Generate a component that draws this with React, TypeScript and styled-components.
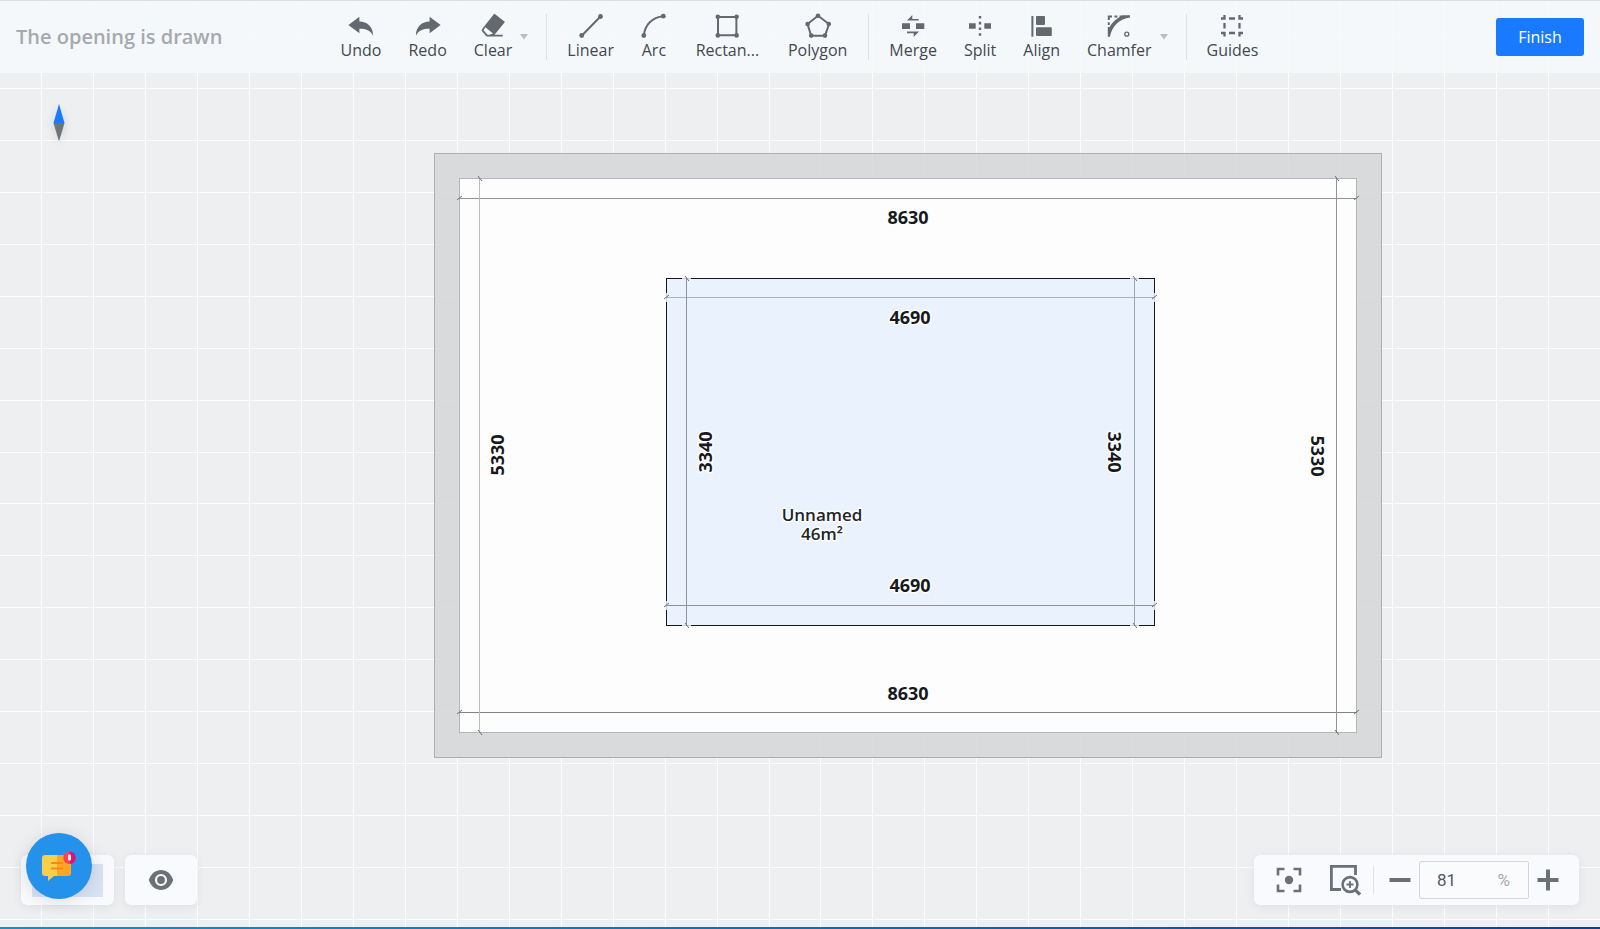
import React from "react";
import styled, { createGlobalStyle } from "styled-components";

const ink = "#64686f";
const sans = `"Open Sans", "Noto Sans", sans-serif`;

const GlobalStyle = createGlobalStyle`
  *, *::before, *::after { box-sizing: border-box; }
  body { margin: 0; background: #eeeff1; font-family: ${sans}; }
  button, input { font: inherit; color: inherit; }
`;

const Shell = styled.div`
  position: relative;
  display: flex;
  flex-direction: column;
  min-height: 100vh;
  overflow: hidden;
  border-bottom: 2px solid transparent;
  border-image: linear-gradient(90deg, #1092cc, #0b66b4 60%, #0b3f9c) 1;
`;

const Canvas = styled.svg`
  position: absolute;
  inset: 0;
  width: 100%;
  height: 100%;
  font-family: ${sans};
`;

const Header = styled.header`
  position: relative;
  display: grid;
  grid-template-columns: 1fr auto 1fr;
  align-items: center;
  height: 73px;
  padding: 0 16px;
  border-top: 1px solid #dcdee1;
  background: rgba(246, 249, 253, 0.85);
`;

const Title = styled.h1`
  margin: 0;
  font-size: 20px;
  line-height: 28px;
  font-weight: 600;
  color: #a6a9ae;
`;

const Toolbar = styled.nav`
  display: flex;
  align-items: center;
`;

const Tool = styled.button<{ $wide?: boolean }>`
  display: flex;
  flex-direction: column;
  align-items: center;
  width: ${(p) => (p.$wide ? "94px" : "auto")};
  padding: 0 14px 0 13px;
  border: 0;
  background: none;
  color: ${ink};
  cursor: pointer;
`;

const ToolIcon = styled.svg`
  width: 26px;
  height: 26px;
  fill: none;
  stroke: currentColor;
  stroke-width: 2;
`;

const ToolLabel = styled.span`
  align-self: stretch;
  font-size: 16px;
  line-height: 22px;
  color: #43484f;
  white-space: nowrap;
`;

const MenuButton = styled.button`
  padding: 0 11px 0 0;
  border: 0;
  background: none;
  color: #b9bcc1;
  margin-left: -6px;
  cursor: pointer;
  svg { display: block; width: 8px; height: 6px; fill: currentColor; }
`;

const Divider = styled.span<{ $short?: boolean }>`
  width: 1px;
  height: ${(p) => (p.$short ? "28px" : "46px")};
  margin: 0 7px;
  background: #dfe1e5;
`;

const Finish = styled.button`
  justify-self: end;
  width: 88px;
  height: 38px;
  border: 0;
  border-radius: 3px;
  background: #1a7aff;
  color: #fff;
  font-size: 16px;
  cursor: pointer;
`;

const Compass = styled.svg`
  position: relative;
  width: 12px;
  height: 38px;
  margin: 31px 0 0 53px;
  filter: drop-shadow(0 2px 4px rgba(0, 0, 0, 0.12));
`;

const Footer = styled.footer`
  position: relative;
  display: flex;
  gap: 11px;
  align-items: center;
  margin-top: auto;
  padding: 0 21px 22px;
`;

const Panel = styled.div<{ $push?: boolean }>`
  position: relative;
  display: flex;
  align-items: center;
  height: 50px;
  margin-left: ${(p) => (p.$push ? "auto" : "0")};
  padding-right: ${(p) => (p.$push ? "12px" : "0")};
  border-radius: 6px;
  background: #f9fafd;
  box-shadow: 0 2px 10px rgba(40, 50, 70, 0.08);
`;

const MiniMap = styled.div`
  width: 71px;
  height: 33px;
  margin: 0 11px;
  background: #d7e3f5;
`;

const ChatButton = styled.button`
  position: absolute;
  left: 5px;
  bottom: 6px;
  width: 66px;
  height: 66px;
  padding: 0;
  border: 0;
  border-radius: 50%;
  background: #2491eb;
  box-shadow: 0 2px 18px rgba(0, 0, 0, 0.12);
  cursor: pointer;
  svg { display: block; width: 66px; height: 66px; }
`;

const IconButton = styled.button<{ $width: number }>`
  display: flex;
  align-items: center;
  justify-content: center;
  width: ${(p) => p.$width}px;
  height: 50px;
  padding: 0;
  border: 0;
  background: none;
  color: #6d7177;
  cursor: pointer;
`;

const Glyph = styled.svg<{ $size: number }>`
  width: ${(p) => p.$size}px;
  height: ${(p) => p.$size}px;
  fill: none;
  stroke: currentColor;
`;

const ZoomField = styled.label`
  display: flex;
  align-items: center;
  width: 110px;
  height: 38px;
  padding: 0 18px 0 17px;
  border: 1px solid #d3d6dc;
  border-radius: 2px;
  background: #fafbfd;
  font-family: Roboto, sans-serif;
  font-size: 17px;
  color: #a6a9ae;
`;

const ZoomInput = styled.input`
  flex: 1;
  min-width: 0;
  padding: 0;
  border: 0;
  outline: 0;
  background: none;
  color: #54585e;
`;

const DimText = styled.text`
  font-size: 18px;
  font-weight: 700;
  fill: #16191d;
  stroke: #fff;
  stroke-width: 3px;
  stroke-linejoin: round;
  paint-order: stroke;
  text-anchor: middle;
`;

const RoomText = styled(DimText)`
  font-size: 17px;
  font-weight: 600;
  fill: #20252b;
`;

const icons: Record<string, React.ReactNode> = {
  Undo: <path stroke="none" fill="currentColor" d="M.4 12 11.4 3.7V8.6C19 8.8 25 13.5 25.1 22.7 22 17 17 15.6 11.4 15.8V20.3Z" />,
  Redo: <path stroke="none" fill="currentColor" d="M25.6 12 14.6 3.7V8.6C7 8.8 1 13.5.9 22.7 4 17 9 15.6 14.6 15.8V20.3Z" />,
  Clear: (
    <>
      <path fill="currentColor" strokeWidth="1.4" strokeLinejoin="round" d="M14.4 1.6 24 9 14.4 20.8 5.2 13.2Z" />
      <path strokeWidth="1.8" strokeLinejoin="round" d="M4.8 13.6 2.5 17.4 7 22.7H22.7M7 22.7H10L14.4 20.8" />
    </>
  ),
  Linear: (
    <>
      <path d="M3.7 22.7 22.7 3.3" />
      <g stroke="none" fill="currentColor"><circle cx="3.7" cy="22.5" r="2.4" /><circle cx="22.5" cy="3.5" r="2.4" /></g>
    </>
  ),
  Arc: (
    <>
      <path d="M2.8 22.5C4 12 11 4.2 22.3 3.2" />
      <g stroke="none" fill="currentColor"><circle cx="2.8" cy="22.5" r="2.4" /><circle cx="22.3" cy="3.2" r="2.4" /></g>
    </>
  ),
  "Rectan...": (
    <>
      <path d="M4 4H22.4V22.2H4Z" />
      <g stroke="none" fill="currentColor">
        <circle cx="3.8" cy="3.8" r="2.3" /><circle cx="22.6" cy="3.8" r="2.3" />
        <circle cx="3.8" cy="22.4" r="2.3" /><circle cx="22.6" cy="22.4" r="2.3" />
      </g>
    </>
  ),
  Polygon: (
    <>
      <path d="M13 2.8 24 11 20 22.8H6.2L2.5 11Z" />
      <g stroke="none" fill="currentColor">
        <circle cx="13" cy="2.8" r="2.3" /><circle cx="23.8" cy="11" r="2.3" /><circle cx="20" cy="22.6" r="2.3" />
        <circle cx="6.2" cy="22.6" r="2.3" /><circle cx="2.6" cy="11" r="2.3" />
      </g>
    </>
  ),
  Merge: (
    <path stroke="none" fill="currentColor" d="M2 10.3H10V16H2ZM16 10.3H24.3V16H16ZM7 7.6 12.3 2V6H18.7V7.6ZM7 18.6H19L13.7 24V20.2H7Z" />
  ),
  Split: (
    <path stroke="none" fill="currentColor" d="M2 10.3H8.7V15.8H2ZM17.3 10.3H24V15.8H17.3ZM11.8 3H14.2V5.4H11.8ZM11.8 8.8H14.2V11.4H11.8ZM11.8 14.6H14.2V17H11.8ZM11.8 20.2H14.2V22.8H11.8Z" />
  ),
  Align: (
    <g stroke="none" fill="currentColor">
      <rect x="2.4" y="3" width="2" height="20.7" />
      <rect x="7" y="3" width="9" height="9" rx="1" />
      <rect x="7" y="14.3" width="15.8" height="8.8" rx="1" />
    </g>
  ),
  Chamfer: (
    <>
      <path d="M1.8 3.4H6M8.4 3.4H11.4M13.6 3.4H18M2.8 3V7M2.8 9.2V12M2.8 14V18" />
      <path stroke="none" fill="currentColor" d="M24 2.3V4.4C13.5 5.8 6.2 12.5 3.9 23.7H1.8V17.5C5 10.500 10 5.200 17.500 2.300Z" />
      <circle cx="20.8" cy="21.2" r="2" strokeWidth="1.3" />
    </>
  ),
  Guides: (
    <path strokeWidth="2.3" d="M5.5 2V6.5M20.5 2V6.5M5.5 19V23.5M20.5 19V23.5M2 5.5H6.5M19.5 5.5H24M2 20H6.5M19.5 20H24M10 5.5H16M10 20H16M5.5 10V15.5M20.5 10V15.5" />
  ),
};

const groups: { name: string; wide?: boolean; menu?: boolean }[][] = [
  [{ name: "Undo" }, { name: "Redo" }, { name: "Clear", menu: true }],
  [{ name: "Linear" }, { name: "Arc" }, { name: "Rectan...", wide: true }, { name: "Polygon" }],
  [{ name: "Merge" }, { name: "Split" }, { name: "Align" }, { name: "Chamfer", menu: true }],
  [{ name: "Guides" }],
];

const columns = Array.from({ length: 60 }, (_, i) => 41 + Math.round((i * 1507) / 29));
const rows = Array.from({ length: 40 }, (_, i) => 36 + Math.round((i * 883) / 17));

type DimProps = { at: number; from: number; to: number; label: string; x: number; y: number; turn?: number; color?: string };

/** Horizontal dimension line with slanted ticks at both ends. */
function DimH({ at, from, to, label, x, y, color = "#909397" }: DimProps) {
  return (
    <g>
      <path d={`M${from} ${at + 0.5}H${to}`} stroke={color} />
      <path d={`M${from - 2} ${at + 2}l5 -4M${to - 3} ${at + 2}l5 -4`} stroke="#6d7074" />
      <DimText x={x} y={y}>{label}</DimText>
    </g>
  );
}

/** Vertical dimension line; its label is turned to run along the line. */
function DimV({ at, from, to, label, x, y, turn = -90, color = "#909397" }: DimProps) {
  return (
    <g>
      <path d={`M${at + 0.5} ${from}V${to}`} stroke={color} />
      <path d={`M${at - 1} ${from - 2}l4 5M${at - 1} ${to - 3}l4 5`} stroke="#6d7074" />
      <DimText transform={`translate(${x} ${y}) rotate(${turn})`} y="6">{label}</DimText>
    </g>
  );
}

function FloorPlan() {
  return (
    <Canvas role="img" aria-label="Floor plan" fill="none">
      <g stroke="#fbfcfd">
        {columns.map((x) => <line key={x} x1={x + 0.5} x2={x + 0.5} y1="0" y2="100%" />)}
        {rows.map((y) => <line key={y} x1="0" x2="100%" y1={y + 0.5} y2={y + 0.5} />)}
      </g>
      <rect x="434.5" y="153.5" width="947" height="604" fill="#d4d6d8" fillOpacity="0.85" stroke="#acaeb1" />
      <rect x="459.5" y="178.5" width="897" height="554" fill="#fdfdfe" stroke="#b3b5b8" />
      <rect x="666.5" y="278.5" width="488" height="347" fill="#eaf2fd" stroke="#16181b" />
      <g stroke="#c9cfd8">
        <path d="M682 278.5h9M1130 278.5h9M682 625.5h9M1130 625.5h9M666.5 293v9M1154.5 293v9M666.5 601v9M1154.5 601v9" />
      </g>
      <DimH at={198} from={459} to={1357} label="8630" x={908} y={224} />
      <DimH at={712} from={459} to={1357} label="8630" x={908} y={700} color="#808387" />
      <DimV at={479} from={178} to={733} label="5330" x={498} y={455} color="#b9bbbe" />
      <DimV at={1336} from={178} to={733} label="5330" x={1317} y={456} turn={90} />
      <DimH at={297} from={666} to={1155} label="4690" x={910} y={324} color="#a9b3c0" />
      <DimH at={605} from={666} to={1155} label="4690" x={910} y={592} />
      <DimV at={686} from={278} to={626} label="3340" x={706} y={452} />
      <DimV at={1134} from={278} to={626} label="3340" x={1114} y={452} turn={90} color="#9aa8b2" />
      <RoomText x="822" y="521">
        Unnamed
        <tspan x="822" dy="19">46m²</tspan>
      </RoomText>
    </Canvas>
  );
}

export default function App() {
  return (
    <Shell>
      <GlobalStyle />
      <FloorPlan />
      <Header>
        <Title>The opening is drawn</Title>
        <Toolbar aria-label="Drawing tools">
          {groups.map((group, g) => (
            <React.Fragment key={g}>
              {g > 0 && <Divider />}
              {group.map(({ name, wide, menu }) => (
                <React.Fragment key={name}>
                  <Tool type="button" $wide={wide}>
                    <ToolIcon viewBox="0 0 26 26" aria-hidden="true">{icons[name]}</ToolIcon>
                    <ToolLabel>{name}</ToolLabel>
                  </Tool>
                  {menu && (
                    <MenuButton type="button" aria-label={`${name} options`}>
                      <svg viewBox="0 0 8 6"><path d="M0 0H8L4 5.500Z" /></svg>
                    </MenuButton>
                  )}
                </React.Fragment>
              ))}
            </React.Fragment>
          ))}
        </Toolbar>
        <Finish type="button">Finish</Finish>
      </Header>

      <Compass viewBox="0 0 12 38" aria-hidden="true">
        <path d="M6 0 11.500 19H.5Z" fill="#1a7aff" />
        <path d="M.5 19H11.500L6 37.500Z" fill="#6f747b" />
      </Compass>

      <Footer>
        <Panel>
          <MiniMap />
          <ChatButton type="button" aria-label="Open chat">
            <svg viewBox="0 0 66 66" aria-hidden="true">
              <path d="M19 22H31V43H28L22 48V43H19Q16 43 16 40V25Q16 22 19 22Z" fill="#f6d04b" />
              <path d="M31 22H42Q45 22 45 25V40Q45 43 42 43H31Z" fill="#ffa424" />
              <path d="M25 30H37M25 35.500H37" stroke="#f58a0c" strokeWidth="1.800" />
              <path d="M43.500 18.500A6.200 6.200 0 0 0 43.500 31Z" fill="#fb4453" />
              <path d="M43.500 18.500A6.200 6.200 0 0 1 43.500 31Z" fill="#e60f6c" />
              <rect x="42" y="21.500" width="3" height="6" rx="1" fill="#fde8ee" />
            </svg>
          </ChatButton>
        </Panel>
        <Panel>
          <IconButton type="button" $width={72} aria-label="Toggle visibility">
            <Glyph $size={26} viewBox="0 0 26 26" aria-hidden="true">
              <path stroke="none" fill="currentColor" d="M13 3C7.500 3 3 6.500.8 13 3 19.500 7.500 23 13 23S23 19.500 25.200 13C23 6.500 18.500 3 13 3Z" />
              <circle cx="13" cy="13" r="5" stroke="#f9fafd" strokeWidth="2.200" />
            </Glyph>
          </IconButton>
        </Panel>
        <Panel $push>
          <IconButton type="button" $width={70} aria-label="Fit to screen">
            <Glyph $size={26} viewBox="0 0 26 26" strokeWidth="2.600" aria-hidden="true">
              <path d="M2 8.500V2H8.500M17.500 2H24V8.500M24 17.500V24H17.500M8.500 24H2V17.500" />
              <circle cx="13" cy="13" r="4.200" stroke="none" fill="currentColor" />
            </Glyph>
          </IconButton>
          <IconButton type="button" $width={42} aria-label="Zoom to area">
            <Glyph $size={32} viewBox="0 0 32 32" aria-hidden="true">
              <path strokeWidth="2.800" d="M12 25.500H2.400V2.400H26.500V11" />
              <circle cx="21" cy="20.500" r="7.400" strokeWidth="2.600" />
              <path strokeWidth="1.800" d="M17.500 20.500H24.500M21 17V24" />
              <path strokeWidth="3.200" d="M26.200 25.800 31 30.600" />
            </Glyph>
          </IconButton>
          <Divider $short />
          <IconButton type="button" $width={38} aria-label="Zoom out">
            <Glyph $size={22} viewBox="0 0 22 22" strokeWidth="4" aria-hidden="true"><path d="M.5 11H21.500" /></Glyph>
          </IconButton>
          <ZoomField>
            <ZoomInput aria-label="Zoom level" defaultValue="81" />
            %
          </ZoomField>
          <IconButton type="button" $width={38} aria-label="Zoom in">
            <Glyph $size={22} viewBox="0 0 22 22" strokeWidth="4" aria-hidden="true"><path d="M.5 11H21.500M11 .5V21.500" /></Glyph>
          </IconButton>
        </Panel>
      </Footer>
    </Shell>
  );
}
